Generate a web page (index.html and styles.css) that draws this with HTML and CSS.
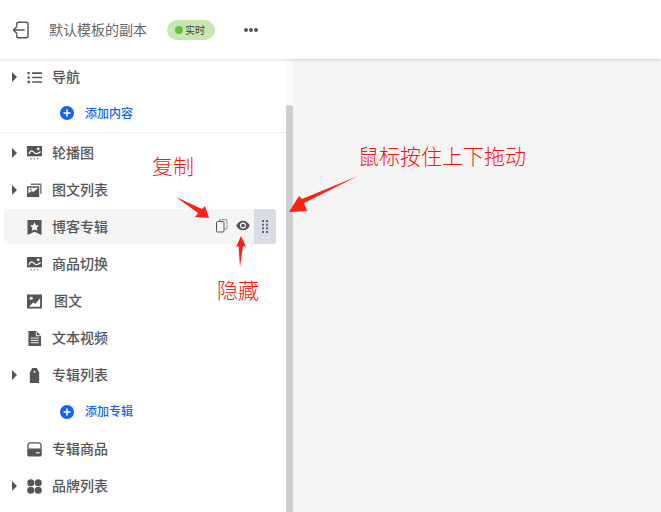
FILE: index.html
```html
<!DOCTYPE html>
<html lang="zh-CN">
<head>
<meta charset="utf-8">
<title>默认模板的副本</title>
<link rel="stylesheet" href="styles.css">
</head>
<body>
<div class="app">
  <header class="topbar">
    <svg class="back" width="17" height="18" viewBox="0 0 18 18" fill="none" stroke="#555" stroke-width="1.500"><path d="M5 4.500V2.800A2 2 0 0 1 7 .8h8a2 2 0 0 1 2 2v12.400a2 2 0 0 1-2 2H7a2 2 0 0 1-2-2v-1.700"/><path d="M13.500 9H1.500M5.500 5 1.500 9l4 4"/></svg>
    <span class="title">默认模板的副本</span>
    <span class="badge"><i class="dot"></i>实时</span>
    <span class="more"><i></i><i></i><i></i></span>
  </header>
  <div class="body">
    <aside class="side">
      <div class="track"><div class="thumb"></div></div>
      <div class="group first">
        <div class="row"><span class="caret"></span>
          <svg class="ic" viewBox="0 0 16 16" fill="#555"><path d="M.5 2h2.500v2.500H.5zM5.500 2.500H16v1.700H5.500zM.5 6.800h2.500v2.500H.5zM5.500 7.200H16v1.700H5.500zM.5 11.500h2.500V14H.5zM5.500 12H16v1.700H5.500z"/></svg>
          <span class="label">导航</span></div>
        <div class="add"><svg width="14" height="14" viewBox="0 0 14 14"><circle cx="7" cy="7" r="7" fill="#1265f0"/><path d="M3.500 7h7M7 3.500v7" stroke="#fff" stroke-width="1.600"/></svg><span>添加内容</span></div>
      </div>
      <div class="group">
        <div class="row"><span class="caret"></span>
          <svg class="ic" viewBox="0 0 16 16" fill="#555"><path d="M0 0h16v11H0z"/><path d="M2 8.500C3 6 4.500 4.500 6 5.500s2.500 3 4.500 2.500 3-1.500 4-2" fill="none" stroke="#fff" stroke-width="1.300"/><circle cx="12" cy="3" r="1.500" fill="#fff"/><path d="M3.500 12.500h1.500V14.500H3.500zM7 12.500h1.500V14.500H7zM10.500 12.500H12V14.500h-1.500z" fill="#999"/></svg>
          <span class="label">轮播图</span></div>
        <div class="row"><span class="caret"></span>
          <svg class="ic" viewBox="0 0 16 16" fill="#555"><path d="M4 .5h11.500v11H14V2H4z" fill="#777"/><path d="M0 3.500h13v11.500H0z"/><path d="M1.500 11 5 8.500l2 1 4.500-4V5h-10z" fill="#fff"/><circle cx="4" cy="7" r="1" fill="#555"/></svg>
          <span class="label">图文列表</span></div>
        <div class="row active"><span class="caret none"></span>
          <svg class="ic" viewBox="0 0 16 16" fill="#555"><path d="M.5 0h15v16L8 12.500.5 16z"/><path d="m8 2.500 1.500 3 3.200.4-2.300 2.300.6 3.300L8 10l-3 1.500.6-3.300L3.300 5.900l3.200-.4z" fill="#fff"/></svg>
          <span class="label">博客专辑</span>
          <span class="tools">
            <svg class="copy" width="12" height="14" viewBox="0 0 12 14" fill="none" stroke="#555"><rect x=".5" y="2.500" width="7.500" height="10.500" rx="1"/><path d="M3.500 2V.7h7.500v9.300H8.500" stroke="#8a94a6"/></svg>
            <svg class="eye" width="14" height="11" viewBox="0 0 15 11"><path d="M.2 5.500C2 2 4.500.3 7.500.3s5.500 1.700 7.300 5.200c-1.800 3.500-4.300 5.200-7.300 5.200S2 9 .2 5.500z" fill="#555"/><circle cx="7.500" cy="5.500" r="3.200" fill="#fff"/><circle cx="7.500" cy="5.500" r="2" fill="#555"/></svg>
            <span class="handle"><svg width="6" height="13" viewBox="0 0 6 13" fill="#666"><path d="M0 0h2v2H0zM4 0h2v2H4zM0 3.700h2v2H0zM4 3.700h2v2H4zM0 7.300h2v2H0zM4 7.300h2v2H4zM0 11h2v2H0zM4 11h2v2H4z"/></svg></span>
          </span></div>
        <div class="row"><span class="caret none"></span>
          <svg class="ic" viewBox="0 0 16 16" fill="#555"><path d="M0 0h16v11H0z"/><path d="M2 8.500C3 6 4.500 4.500 6 5.500s2.500 3 4.500 2.500 3-1.500 4-2" fill="none" stroke="#fff" stroke-width="1.300"/><circle cx="12" cy="3" r="1.500" fill="#fff"/><path d="M3.500 12.500h1.500V14.500H3.500zM7 12.500h1.500V14.500H7zM10.500 12.500H12V14.500h-1.500z" fill="#999"/></svg>
          <span class="label">商品切换</span></div>
        <div class="row"><span class="caret none"></span>
          <svg class="ic" viewBox="0 0 16 16" fill="#555"><path d="M0 .5h16v15H0z"/><circle cx="4.500" cy="4.500" r="1.700" fill="#fff"/><path d="M2 13.500 6.500 9 9 10.500l5-6v9z" fill="#fff"/></svg>
          <span class="label wide">图文</span></div>
        <div class="row"><span class="caret none"></span>
          <svg class="ic" viewBox="0 0 16 16" fill="#555"><path d="M1.500 0h8.500L15 5v11H1.500z"/><path d="M4 7.500h8.500M4 10h8.500M4 12.500h8.500" stroke="#fff"/><path d="M10 .5V5h5" fill="none" stroke="#fff"/></svg>
          <span class="label">文本视频</span></div>
        <div class="row"><span class="caret"></span>
          <svg class="ic" viewBox="0 0 16 16" fill="#555"><path d="M5.500 0h5l2.500 5v11H3V5z"/><circle cx="8" cy="4" r="1.100" fill="#fff"/></svg>
          <span class="label">专辑列表</span></div>
        <div class="add"><svg width="14" height="14" viewBox="0 0 14 14"><circle cx="7" cy="7" r="7" fill="#1265f0"/><path d="M3.500 7h7M7 3.500v7" stroke="#fff" stroke-width="1.600"/></svg><span>添加专辑</span></div>
        <div class="row"><span class="caret none"></span>
          <svg class="ic" viewBox="0 0 16 16" fill="#555"><path d="M1 7V3.500A2.500 2.500 0 0 1 3.500 1h9A2.500 2.500 0 0 1 15 3.500V7" fill="none" stroke="#555" stroke-width="1.400"/><path d="M.3 7h15.400v6.500a2 2 0 0 1-2 2H2.300a2 2 0 0 1-2-2z"/><path d="M9.500 11.500h4" stroke="#fff" stroke-width="1.200"/></svg>
          <span class="label">专辑商品</span></div>
        <div class="row"><span class="caret"></span>
          <svg class="ic" viewBox="0 0 16 16" fill="#555"><circle cx="4" cy="4" r="3.800"/><circle cx="12" cy="4" r="3.800"/><circle cx="4" cy="12" r="3.800"/><circle cx="12" cy="12" r="3.800"/></svg>
          <span class="label">品牌列表</span></div>
      </div>
    </aside>
    <main class="canvas"></main>
  </div>
  <span class="note n-copy">复制</span>
  <span class="note n-hide">隐藏</span>
  <span class="note n-drag">鼠标按住上下拖动</span>
  <svg class="arrows" width="661" height="512" viewBox="0 0 661 512" fill="#ff2116">
    <path d="M176 197 202 209 205 206 209 218 195 217 198 213z"/>
    <path d="M240 267 238.500 246 236 247 241 236 246 247 243 246z"/>
    <path d="M358 176 304 203 307 211 289 212 299 196 302 199z"/>
  </svg>
</div>
</body>
</html>
```

FILE: styles.css
```css
* { box-sizing: border-box; }
html, body { margin: 0; height: 100%; }
body { font-family: "Noto Sans CJK SC", "Liberation Sans", sans-serif; overflow: hidden; }
.app { position: relative; width: 661px; height: 512px; overflow: hidden; background: #fff; }
.topbar { position: relative; z-index: 2; height: 59px; display: flex; align-items: center; padding-left: 12px; background: #fff; box-shadow: 0 1px 3px rgba(0,0,0,.14); }
.back { margin-right: 20px; }
.title { font-size: 14px; color: #666; width: 118px; padding-bottom: 2px; }
.badge { width: 48px; height: 20px; border-radius: 10px; background: #c5e8b1; display: flex; align-items: center; padding-left: 8px; font-size: 10px; color: #444; gap: 2px; }
.dot { width: 8px; height: 8px; border-radius: 50%; background: #67c23a; }
.more { margin-left: 29px; display: flex; gap: 1px; }
.more i { width: 4px; height: 4px; border-radius: 50%; background: #555; }
.body { display: flex; height: 453px; }
.side { position: relative; width: 293px; flex: none; background: #fff; }
.track { position: absolute; top: 0; right: 0; bottom: 0; width: 7px; background: #fbfbfb; }
.thumb { position: absolute; top: 46px; bottom: 0; left: 0; right: 0; background: #cdcfd2; border-radius: 3px 3px 0 0; }
.canvas { flex: 1; background: #f5f5f5; }
.group.first { height: 74px; border-bottom: 1px solid #eeeef4; margin-right: 7px; }
.group + .group { padding-top: 2px; }
.row { width: 272px; margin-left: 4px; height: 35px; margin-bottom: 2px; display: flex; align-items: center; border-radius: 3px; position: relative; }
.row.active { background: #f5f5f5; }
.caret { width: 0; height: 0; margin-left: 8px; margin-right: 10px; border-left: 5px solid #555; border-top: 5px solid transparent; border-bottom: 5px solid transparent; }
.caret.none { border-left-color: transparent; }
.ic { width: 15px; height: 15px; flex: none; margin-top: 1px; }
.label { margin-left: 10px; font-size: 14px; font-weight: 500; color: #555; padding-bottom: 2px; }
.label.wide { margin-left: 12px; }
.add { height: 35px; margin-bottom: 2px; display: flex; align-items: center; padding-left: 60px; gap: 11px; font-size: 12px; font-weight: 500; color: #1265f0; }
.add span { padding-bottom: 2px; }
.first .add { height: 34px; margin-bottom: 0; }
.tools { margin-left: auto; display: flex; align-items: center; height: 100%; }
.copy { margin-right: 8px; margin-bottom: 1px; }
.eye { margin-right: 4px; margin-bottom: 2px; }
.handle { width: 22px; height: 100%; background: #d9dce3; border-radius: 0 3px 3px 0; display: flex; align-items: center; justify-content: center; }
.note { position: absolute; z-index: 3; color: #f8170c; font-size: 21px; line-height: 24px; font-weight: 300; }
.n-copy { left: 152px; top: 153px; }
.n-hide { left: 217px; top: 277px; }
.n-drag { left: 358px; top: 143px; }
.arrows { position: absolute; left: 0; top: 0; z-index: 3; }
```
